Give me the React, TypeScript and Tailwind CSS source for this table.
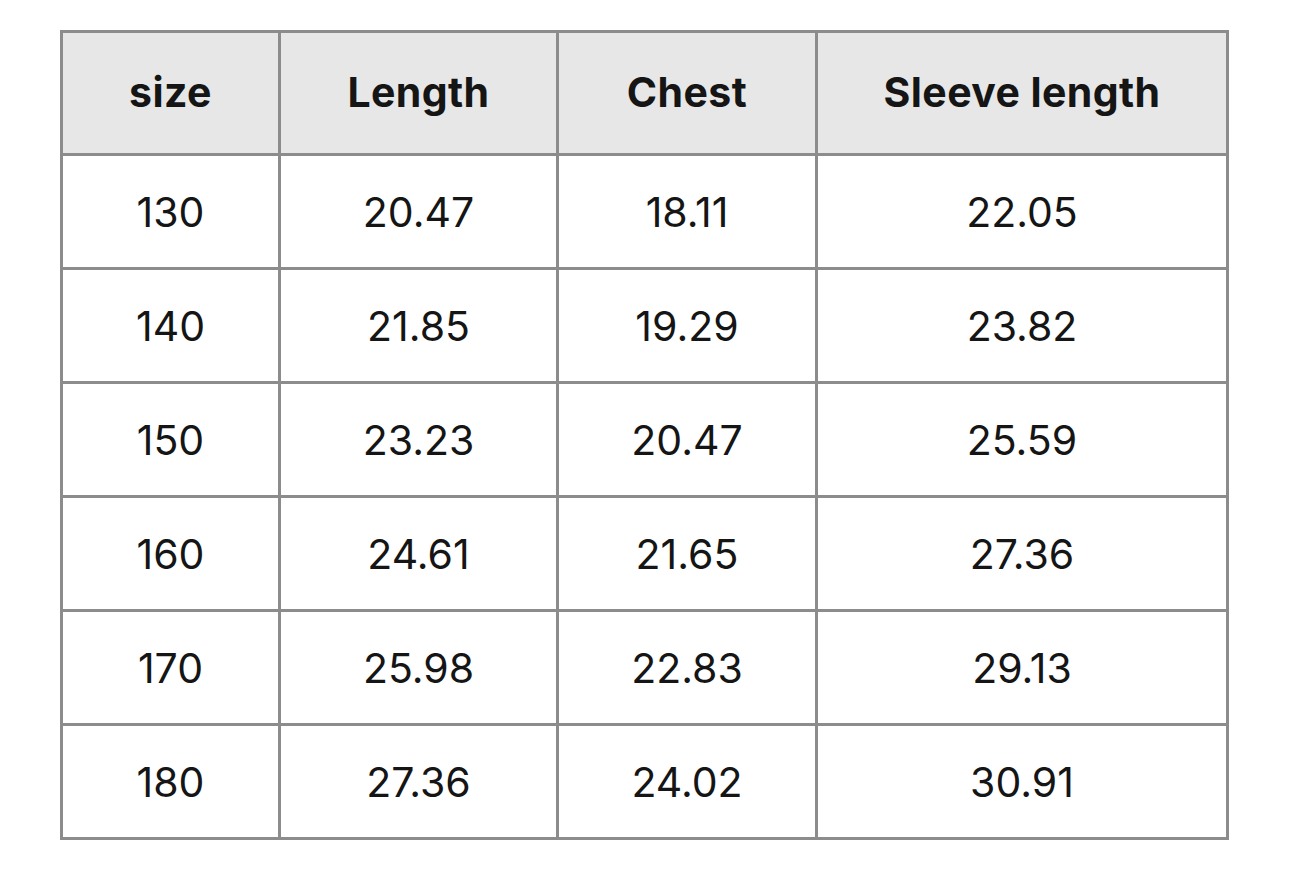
import React from "react";

const rows = [
  ["130", "20.47", "18.11", "22.05"],
  ["140", "21.85", "19.29", "23.82"],
  ["150", "23.23", "20.47", "25.59"],
  ["160", "24.61", "21.65", "27.36"],
  ["170", "25.98", "22.83", "29.13"],
  ["180", "27.36", "24.02", "30.91"],
];

const headers = ["size", "Length", "Chest", "Sleeve length"];

export default function App() {
  return (
    <div className="w-[1290px] h-[881px] bg-white pt-[30px] pl-[60px]" style={{ fontFamily: "Inter, 'Liberation Sans', sans-serif" }}>
      <div className="grid grid-cols-[215px_275px_256px_408px] grid-rows-[120px_repeat(6,111px)] gap-[3px] p-[3px] bg-[#8c8c8c] w-[1169px] text-[#151515]">
        {headers.map((h) => (
          <div key={h} className="bg-[#e7e7e7] flex items-center justify-center text-[41px] font-bold tracking-[0.4px]">
            {h}
          </div>
        ))}
        {rows.flatMap((r, i) =>
          r.map((c, j) => (
            <div key={`${i}-${j}`} className="bg-white flex items-center justify-center pt-[2px] text-[41px] tracking-[0px]">
              {c}
            </div>
          ))
        )}
      </div>
    </div>
  );
}
